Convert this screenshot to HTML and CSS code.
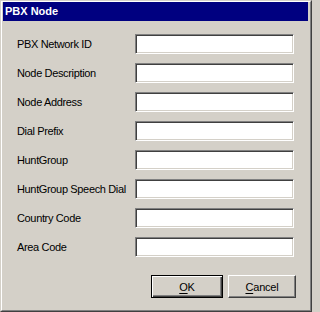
FILE: index.html
```html
<!DOCTYPE html>
<html>
<head>
<meta charset="utf-8">
<link rel="stylesheet" href="styles.css">
</head>
<body>
<div class="window">
  <div class="frame">
    <div class="titlebar">PBX Node</div>
    <div class="content">
      <div class="form">
        <label class="label">PBX Network ID</label><div class="field"></div>
        <label class="label">Node Description</label><div class="field"></div>
        <label class="label">Node Address</label><div class="field"></div>
        <label class="label">Dial Prefix</label><div class="field"></div>
        <label class="label">HuntGroup</label><div class="field"></div>
        <label class="label">HuntGroup Speech Dial</label><div class="field"></div>
        <label class="label">Country Code</label><div class="field"></div>
        <label class="label">Area Code</label><div class="field"></div>
      </div>
      <div class="buttons">
        <div class="btn btn-default"><span><u>O</u>K</span></div>
        <div class="btn btn-cancel"><span><u>C</u>ancel</span></div>
      </div>
    </div>
  </div>
</div>
</body>
</html>
```

FILE: styles.css
```css
html, body {
  margin: 0;
  padding: 0;
  background: #d4d0c8;
}
.window {
  width: 312px;
  height: 312px;
  box-sizing: border-box;
  border-top: 1px solid #d4d0c8;
  border-left: 1px solid #d4d0c8;
  border-right: 1px solid #404040;
  border-bottom: 1px solid #404040;
  background: #d4d0c8;
  font-family: "Liberation Sans", Arial, sans-serif;
  font-size: 11px;
  color: #000;
}
.frame {
  height: 100%;
  box-sizing: border-box;
  border-top: 1px solid #ffffff;
  border-left: 1px solid #ffffff;
  border-right: 1px solid #808080;
  border-bottom: 1px solid #808080;
  padding: 0 2px 2px 1px;
  display: flex;
  flex-direction: column;
}
.titlebar {
  height: 19px;
  background: #000080;
  color: #ffffff;
  font-weight: bold;
  font-size: 11px;
  line-height: 19px;
  padding-left: 2px;
}
.content {
  padding: 13px 12px 0 0;
  display: flex;
  flex-direction: column;
}
.form {
  display: grid;
  grid-template-columns: 132px 159px;
  row-gap: 9px;
  align-items: center;
}
.label {
  padding-left: 14px;
  letter-spacing: -0.35px;
  white-space: nowrap;
  line-height: 20px;
}
.field {
  height: 20px;
  box-sizing: border-box;
  background: #ffffff;
  border-top: 1px solid #808080;
  border-left: 1px solid #808080;
  border-right: 1px solid #ffffff;
  border-bottom: 1px solid #ffffff;
  box-shadow: inset 1px 1px 0 #404040, inset -1px -1px 0 #d4d0c8;
}
.buttons {
  margin-top: 18px;
  display: flex;
  justify-content: flex-end;
  gap: 5px;
}
.btn {
  height: 23px;
  box-sizing: border-box;
  display: flex;
  align-items: center;
  justify-content: center;
  background: #d4d0c8;
  letter-spacing: -0.2px;
}
.btn u {
  text-decoration-thickness: 1px;
  text-underline-offset: 2px;
}
.btn-cancel {
  width: 68px;
  border-top: 1px solid #ffffff;
  border-left: 1px solid #ffffff;
  border-right: 1px solid #404040;
  border-bottom: 1px solid #404040;
  box-shadow: inset -1px -1px 0 #808080;
}
.btn-default {
  width: 72px;
  border: 1px solid #000000;
  box-shadow: inset 1px 1px 0 #ffffff, inset -1px -1px 0 #404040, inset -2px -2px 0 #808080;
}
```
